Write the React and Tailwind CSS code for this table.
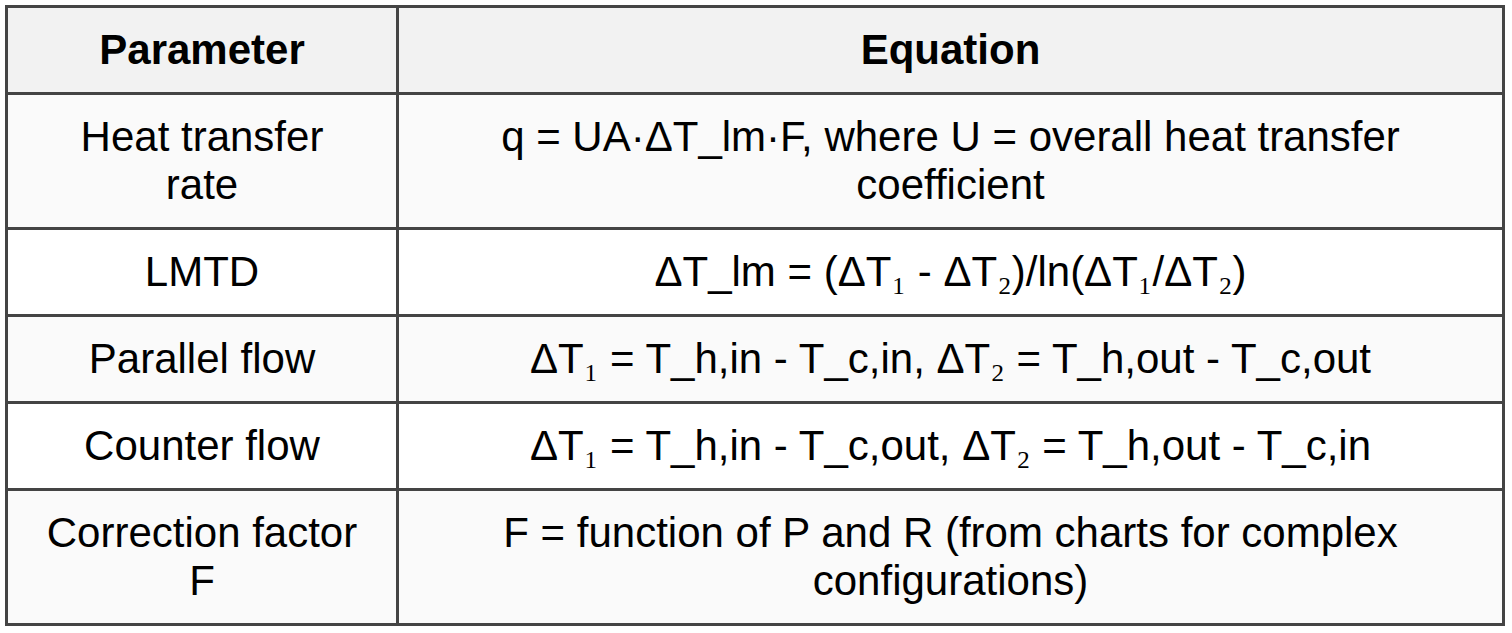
import React from 'react';

const Sub = ({ children }) => (
    <span className="font-['Liberation_Serif',serif]">{children}</span>
);

const rows = [
    {
        param: 'Heat transfer rate',
        eq: <>q = UA·ΔT_lm·F, where U = overall heat transfer coefficient</>,
    },
    {
        param: 'LMTD',
        eq: <>ΔT_lm = (ΔT<Sub>₁</Sub> - ΔT<Sub>₂</Sub>)/ln(ΔT<Sub>₁</Sub>/ΔT<Sub>₂</Sub>)</>,
    },
    {
        param: 'Parallel flow',
        eq: <>ΔT<Sub>₁</Sub> = T_h,in - T_c,in, ΔT<Sub>₂</Sub> = T_h,out - T_c,out</>,
    },
    {
        param: 'Counter flow',
        eq: <>ΔT<Sub>₁</Sub> = T_h,in - T_c,out, ΔT<Sub>₂</Sub> = T_h,out - T_c,in</>,
    },
    {
        param: 'Correction factor F',
        eq: <>F = function of P and R (from charts for complex configurations)</>,
    },
];

export default function App() {
    return (
        <div className="w-[1512px] h-[633px] bg-white p-[5px] font-['Liberation_Sans',Arial,sans-serif] text-black">
            <table className="w-[1500px] table-fixed border-collapse text-[42px] leading-[48px]">
                <colgroup>
                    <col className="w-[391px]" />
                    <col />
                </colgroup>
                <thead>
                    <tr className="bg-[#f2f2f2]">
                        <th className="border-[3px] border-[#444444] px-[36px] py-[18px] font-bold text-center">Parameter</th>
                        <th className="border-[3px] border-[#444444] px-[36px] py-[18px] font-bold text-center">Equation</th>
                    </tr>
                </thead>
                <tbody>
                    {rows.map((r, i) => (
                        <tr key={r.param} className={i % 2 === 0 ? 'bg-[#fafafa]' : 'bg-white'}>
                            <td className="border-[3px] border-[#444444] px-[36px] py-[18px] text-center align-middle">{r.param}</td>
                            <td className="border-[3px] border-[#444444] px-[36px] py-[18px] text-center align-middle">{r.eq}</td>
                        </tr>
                    ))}
                </tbody>
            </table>
        </div>
    );
}
